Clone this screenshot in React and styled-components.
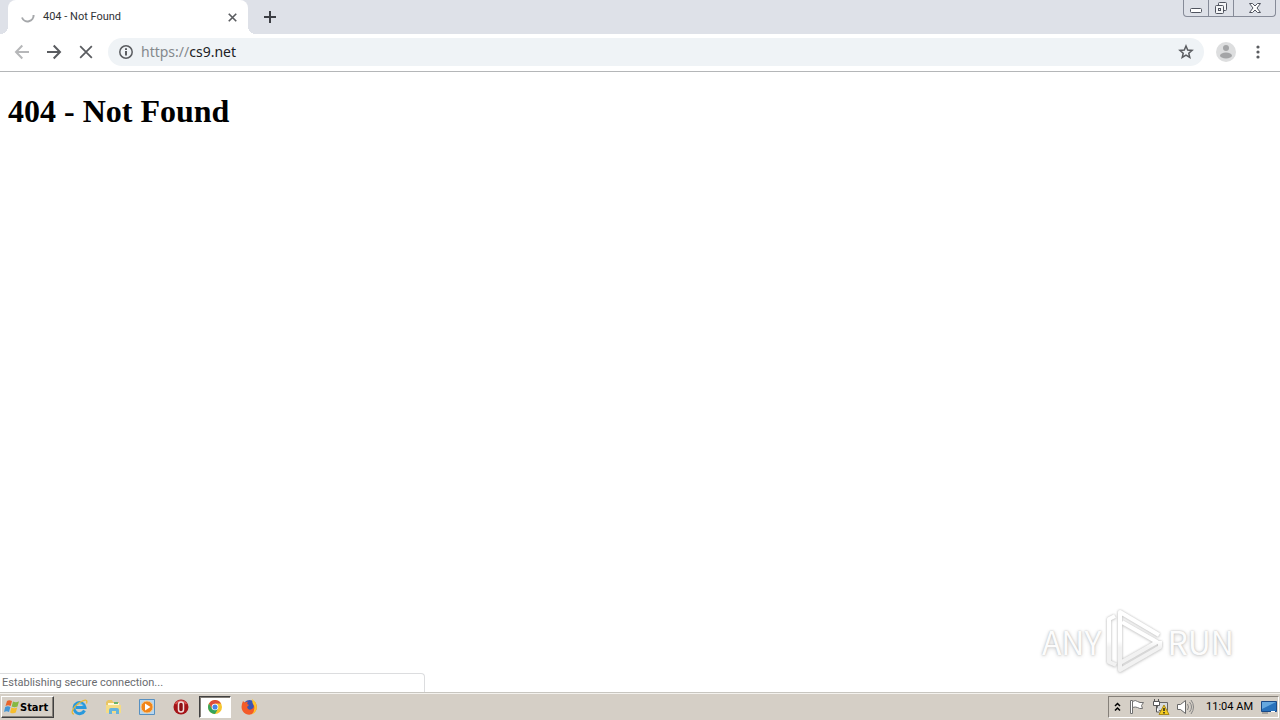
import styled, { createGlobalStyle } from "styled-components";

const GlobalStyle = createGlobalStyle`
    * {
        box-sizing: border-box;
    }
    body {
        margin: 0;
        background: #fff;
        font-family: Roboto, "Liberation Sans", sans-serif;
    }
    button {
        padding: 0;
        border: none;
        background: none;
        color: inherit;
        font: inherit;
    }
    svg {
        display: block;
        flex: none;
    }
`

const Desktop = styled.div`
    display: flex;
    flex-direction: column;
    min-height: 100vh;
`

const TabStrip = styled.header`
    display: flex;
    justify-content: space-between;
    height: 34px;
    padding: 0 4px 0 8px;
    background: #dee1e8;
`
const TabGroup = styled.div`
    display: flex;
    align-items: center;
    gap: 12px;
`
const Tab = styled.div`
    position: relative;
    display: flex;
    align-items: center;
    gap: 7px;
    width: 240px;
    height: 34px;
    padding: 0 8px 0 12px;
    border-radius: 8px 8px 0 0;
    background: #fff;
    &::before,
    &::after {
        content: "";
        position: absolute;
        bottom: 0;
        width: 8px;
        height: 8px;
    }
    &::before {
        left: -8px;
        background: radial-gradient(circle at 0 0, transparent 8px, #fff 8px);
    }
    &::after {
        right: -8px;
        background: radial-gradient(circle at 100% 0, transparent 8px, #fff 8px);
    }
`
const TabTitle = styled.span`
    flex: 1;
    font-size: 11px;
    line-height: 16px;
    color: #303236;
`
const IconButton = styled.button`
    display: flex;
    align-items: center;
    justify-content: center;
    width: ${({ $size }) => $size || 20}px;
    height: ${({ $size }) => $size || 20}px;
    color: ${({ $color }) => $color || "#5a5c60"};
`
const WindowControls = styled.div`
    display: flex;
    height: 17px;
    border: 1px solid #868b98;
    border-top: none;
    border-radius: 0 0 4px 4px;
`
const WindowButton = styled.button`
    display: flex;
    align-items: center;
    justify-content: center;
    width: ${({ $width }) => $width}px;
    color: #50545f;
    & + & {
        border-left: 1px solid #868b98;
    }
`

const Toolbar = styled.nav`
    display: flex;
    align-items: center;
    height: 38px;
    padding: 0 12px 1px;
    border-bottom: 1px solid #b4b6b8;
    background: #fff;
`
const NavButtons = styled.div`
    display: flex;
    gap: 12px;
    margin-right: 12px;
`
const Omnibox = styled.div`
    display: flex;
    flex: 1;
    align-items: center;
    gap: 5px;
    height: 28px;
    padding: 0 8px;
    border-radius: 14px;
    background: #eff3f6;
`
const Address = styled.a`
    flex: 1;
    font-family: "Noto Sans", sans-serif;
    font-size: 14px;
    line-height: 20px;
    text-decoration: none;
    color: #202124;
`
const Scheme = styled.span`
    color: #85898d;
`
const ToolbarActions = styled.div`
    display: flex;
    gap: 12px;
    margin-left: 12px;
`

const Page = styled.main`
    position: relative;
    flex: 1;
    padding: 21px 8px;
    background: #fff;
`
const Heading = styled.h1`
    margin: 0;
    font-family: "Liberation Serif", serif;
    font-size: 32px;
    font-weight: 700;
    line-height: 37px;
    color: #000;
`
const StatusBubble = styled.div`
    position: absolute;
    bottom: 0;
    left: 0;
    width: 425px;
    height: 19px;
    padding-left: 2px;
    border: 1px solid #dcdddf;
    border-width: 1px 1px 0 0;
    border-radius: 0 4px 0 0;
    font-size: 11px;
    line-height: 18px;
    color: #6a6c70;
    background: #fff;
`
const Watermark = styled.div`
    position: absolute;
    right: 46px;
    bottom: 19px;
    display: flex;
    align-items: center;
    gap: 4px;
    font-family: "Noto Sans CJK SC", sans-serif;
    font-size: 32px;
    line-height: 64px;
    color: #fcfcfc;
    text-shadow: 0 0 2px #b8b8b8, 0 1px 4px #d0d0d0;
`
const PlayLogo = styled.svg`
    overflow: visible;
    filter: drop-shadow(0 0 1px #c0c0c0) drop-shadow(0 1px 1px #e0e0e0);
`

const Taskbar = styled.footer`
    display: flex;
    align-items: center;
    justify-content: space-between;
    height: 28px;
    padding: 2px 1px 1px;
    border-top: 1px solid #c8c6c0;
    background: #d5cfc6;
    box-shadow: inset 0 1px #f4f2ee;
`
const Launchers = styled.div`
    display: flex;
    align-items: center;
    gap: 2px;
`
const StartButton = styled.button`
    display: flex;
    align-items: center;
    width: 53px;
    height: 22px;
    margin-right: 7px;
    padding-left: 2px;
    border: 1px solid;
    border-color: #fff #404040 #404040 #fff;
    box-shadow: inset -1px -1px #858079;
    font-family: "DejaVu Sans Condensed", "DejaVu Sans", sans-serif;
    font-size: 11px;
    font-stretch: condensed;
    font-weight: 700;
    color: #000;
`
const Launcher = styled.button`
    display: flex;
    align-items: center;
    justify-content: center;
    width: 32px;
    height: 22px;
    border: 1px solid transparent;
    ${({ $active }) => $active && `
        border-color: #404040 #fff #fff #404040;
        background: #fff;
        box-shadow: inset 1px 1px #858079;
    `}
`
const Tray = styled.div`
    display: flex;
    align-items: center;
    gap: 6px;
    height: 22px;
    padding: 0 1px 0 4px;
    border: 1px solid;
    border-color: #858079 #fff #fff #858079;
`
const Clock = styled.time`
    margin: 0 2px 0 6px;
    font-size: 11px;
    line-height: 16px;
    color: #000;
`

const Spinner = () => (
    <svg width="16" height="16" viewBox="0 0 16 16" fill="none" stroke="#a5a7aa" strokeWidth="2">
        <path d="M2 8.500A6 6 0 0 0 13.600 6" />
    </svg>
)
const Cross = ({ size, width }) => (
    <svg width={size} height={size} viewBox="0 0 12 12" stroke="currentColor" strokeWidth={width}>
        <path d="m1 1 10 10M11 1 1 11" />
    </svg>
)
const Arrow = ({ back }) => (
    <svg width="16" height="16" viewBox="0 0 16 16" fill="none" stroke="currentColor" strokeWidth="2">
        {back ? <path d="M15 8H2M8.300 1.500 2 8l6.300 6.500" /> : <path d="M1 8h13M7.700 1.500 14 8l-6.300 6.500" />}
    </svg>
)
const Info = () => (
    <svg width="14" height="14" viewBox="0 0 14 14" fill="none" stroke="currentColor" strokeWidth="1.5">
        <circle cx="7" cy="7" r="6.200" />
        <path d="M7 6v4.500M7 3.300v1.600" strokeWidth="2" />
    </svg>
)
const Star = () => (
    <svg width="16" height="16" viewBox="0 0 16 16" fill="none" stroke="currentColor" strokeWidth="1.500">
        <path d="m8 2 1.700 4 4.400.4-3.300 2.900 1 4.200L8 11.200l-3.800 2.300 1-4.200-3.300-2.900 4.400-.4z" />
    </svg>
)
const Avatar = () => (
    <svg width="20" height="20" viewBox="0 0 20 20">
        <circle cx="10" cy="10" r="10" fill="#dddedf" />
        <circle cx="10" cy="6" r="3" fill="#a4a5a7" />
        <ellipse cx="10" cy="13.500" rx="6" ry="3" fill="#a4a5a7" />
    </svg>
)
const Dots = () => (
    <svg width="4" height="14" viewBox="0 0 4 14" fill="currentColor">
        <circle cx="2" cy="2" r="1.600" />
        <circle cx="2" cy="7" r="1.600" />
        <circle cx="2" cy="12" r="1.600" />
    </svg>
)
const Minimize = () => (
    <svg width="14" height="14" viewBox="0 0 14 14" fill="#fff" stroke="currentColor">
        <rect x="1.500" y="7.500" width="11" height="4" rx="1" />
    </svg>
)
const Restore = () => (
    <svg width="14" height="14" viewBox="0 0 14 14" fill="#f4f5f7" stroke="currentColor">
        <rect x="4.500" y="1.500" width="8" height="8" rx="1" />
        <rect x="1.500" y="4.500" width="8" height="8" rx="1" />
        <rect x="4.500" y="7.500" width="2" height="2" />
    </svg>
)
const CloseWindow = () => (
    <svg width="14" height="14" viewBox="0 0 14 14" fill="#fff" stroke="currentColor">
        <path d="M1.500 2.500h3L7 5l2.500-2.500h3L9 7l3.500 4.500h-3L7 9l-2.500 2.500h-3L5 7z" />
    </svg>
)
const Play = () => (
    <PlayLogo width="58" height="64" viewBox="0 0 58 64" fill="none" strokeLinejoin="round">
        <defs>
            <linearGradient id="fade" x1="0" y1="0" x2="0" y2="64" gradientUnits="userSpaceOnUse">
                <stop offset=".5" stopColor="#fff" />
                <stop offset=".600" stopColor="#f2f2f2" />
            </linearGradient>
        </defs>
        <g stroke="url(#fade)" strokeWidth="4">
            <path d="M10 7 4 10v43l7 3" />
            <path d="M15 53V3l39 23" />
            <path d="M17 13l35 20-37 21" />
            <path d="M15 53v8l40-23v-6" />
        </g>
    </PlayLogo>
)
const WindowsFlag = () => (
    <svg width="16" height="16" viewBox="0 0 16 16">
        <path d="M3 2q2-1.600 5 0L6.700 7Q4 5.700 1.500 7z" fill="#e9652b" />
        <path d="M9 2.500q3 1.600 6-.2L13.500 7.500q-3 1.500-5.800 0z" fill="#86b841" />
        <path d="M1.200 8q2.600-1.400 5.200 0L5 13q-2.400-1.300-5 0z" fill="#4596d5" />
        <path d="M7.400 8.500q2.800 1.500 5.800.1L11.800 13.600q-3 1.500-5.700-.2z" fill="#f6bd2c" />
    </svg>
)
const Explorer = () => (
    <svg width="17" height="17" viewBox="0 0 17 17" fill="none">
        <path d="M13.500 11.500a5.500 5.500 0 1 1 .5-3H5" stroke="#2999dc" strokeWidth="3" />
        <path d="M12 6.500a4 4 0 0 0-6-1" stroke="#83d1f4" />
        <path d="M3 15C-1 15 2 8 8 4s9-4 7.500.5" stroke="#e8b934" strokeWidth="1.300" />
    </svg>
)
const Folder = () => (
    <svg width="17" height="17" viewBox="0 0 17 17">
        <path d="M1 3 3 1h4l1 2h6v10H1z" fill="#e9c564" />
        <path d="M3 4h11v7H3z" fill="#fff9d8" />
        <path d="M1 6h15v8H1z" fill="#f4dc85" />
        <path d="M4 15v-4q0-2 2-2h6q2 0 2 2v4h-3v-3H7v3z" fill="#65b3dc" />
        <path d="M9 4h4" stroke="#6bb36b" strokeWidth="2" />
    </svg>
)
const MediaPlayer = () => (
    <svg width="16" height="16" viewBox="0 0 16 16">
        <path d="M.5.500h15v15H.5z" fill="#b7d6ef" stroke="#5790c1" />
        <circle cx="8" cy="8" r="6" fill="#f18519" stroke="#f8c98a" />
        <path d="m6 4.500 5.500 3.500L6 11.500z" fill="#fff" />
    </svg>
)
const Opera = () => (
    <svg width="16" height="16" viewBox="0 0 16 16">
        <circle cx="8" cy="8" r="7.500" fill="#a51418" />
        <path d="M2.500 5a6.500 6.500 0 0 1 11 0" fill="none" stroke="#d8524e" strokeWidth="1.500" />
        <rect x="5.500" y="3" width="5" height="10" rx="2.500" fill="#8c1014" stroke="#f0dedc" strokeWidth="1.500" />
    </svg>
)
const Chrome = () => (
    <svg width="14" height="14" viewBox="0 0 16 16">
        <circle cx="8" cy="8" r="8" fill="#f6c52e" />
        <path d="M1.100 4A8 8 0 0 1 15 4H8L4.500 10z" fill="#de4c3c" />
        <path d="M1.100 4A8 8 0 0 0 8 16l3.500-6H4.500z" fill="#35a45a" />
        <circle cx="8" cy="8" r="3.800" fill="#fff" />
        <circle cx="8" cy="8" r="2.900" fill="#4585e8" />
    </svg>
)
const Firefox = () => (
    <svg width="16" height="16" viewBox="0 0 16 16">
        <circle cx="8.500" cy="7.500" r="6.500" fill="#3a55b5" />
        <path d="M2 2q1 1 2 1.500 2-1 3-.5Q5 5 8 6L6 8q1 4 5 2 3-2 1-5 2 0 1.500-3Q18 8 14 13q-4 4-9 2-7-4-3-13z" fill="#f35b29" />
        <path d="M11 0q6 4 4.500 10-1 4-5 5.500 4-4 2.500-9-2-2-2-6.500z" fill="#ffc52b" />
    </svg>
)
const Chevrons = () => (
    <svg width="9" height="10" viewBox="0 0 9 10" fill="none" stroke="#000" strokeWidth="1.500">
        <path d="m2 4 2.500-2.500L7 4M2 8.500 4.500 6 7 8.500" />
    </svg>
)
const ActionFlag = () => (
    <svg width="18" height="18" viewBox="0 0 18 18" fill="#fff" stroke="#707070">
        <path d="M2.500 2.500h2v13h-2z" />
        <path d="M4.500 3.500q3-2 5 0 2 1.500 6 1l-2 3 1 3q-3 .5-5-1-2-1-5 0z" />
    </svg>
)
const Network = () => (
    <svg width="18" height="18" viewBox="0 0 18 18">
        <path d="M5.500 4.500h10v8h-10z" fill="#d8dbdd" stroke="#666" />
        <path d="M8 15.500h6" stroke="#666" />
        <path d="M2.500 1v3M6.500 1v3M1.500 3.500h6v4h-6zM4.500 8v6h3" fill="#fff" stroke="#555" />
        <path d="m12 7 5 9.500H7z" fill="#f5cc20" stroke="#a98918" />
        <path d="M12 10v3M12 14v1.500" stroke="#222" strokeWidth="1.500" />
    </svg>
)
const Volume = () => (
    <svg width="18" height="18" viewBox="0 0 18 18" fill="none" stroke="#858585">
        <path d="M1.500 6.500h3l5-4v13l-5-4h-3z" fill="#fff" stroke="#666" />
        <path d="M11.500 6q2 3 0 6M13.500 4q4 5 0 10M15 2q5 7 0 14" />
    </svg>
)
const ShowDesktop = () => (
    <svg width="16" height="14" viewBox="0 0 16 14">
        <path d="M.5 1.500h15v10H.5z" fill="#2872bc" stroke="#194987" />
        <path d="M1 2h14L1 9z" fill="#65a8df" />
        <path d="M1 13h6" stroke="#777" />
        <path d="M10 11.500h4" stroke="#fff" />
    </svg>
)

const launchers = [
    { name: "Internet Explorer", Icon: Explorer },
    { name: "Windows Explorer", Icon: Folder },
    { name: "Media Player", Icon: MediaPlayer },
    { name: "Opera", Icon: Opera },
    { name: "Chrome", Icon: Chrome, active: true },
    { name: "Firefox", Icon: Firefox },
]

const App = () => (
    <Desktop>
        <GlobalStyle />
        <TabStrip>
            <TabGroup>
                <Tab>
                    <Spinner />
                    <TabTitle>404 - Not Found</TabTitle>
                    <IconButton $size={16} aria-label="Close tab"><Cross size={9} width={2.2} /></IconButton>
                </Tab>
                <IconButton aria-label="New tab" $color="#3c3e44">
                    <svg width="12" height="12" viewBox="0 0 12 12" stroke="currentColor" strokeWidth="2">
                        <path d="M6 0v12M0 6h12" />
                    </svg>
                </IconButton>
            </TabGroup>
            <WindowControls>
                <WindowButton $width={24} aria-label="Minimize"><Minimize /></WindowButton>
                <WindowButton $width={25} aria-label="Restore"><Restore /></WindowButton>
                <WindowButton $width={42} aria-label="Close"><CloseWindow /></WindowButton>
            </WindowControls>
        </TabStrip>
        <Toolbar>
            <NavButtons>
                <IconButton aria-label="Back" $color="#b6b7b9"><Arrow back /></IconButton>
                <IconButton aria-label="Forward"><Arrow /></IconButton>
                <IconButton aria-label="Stop"><Cross size={14} width={1.5} /></IconButton>
            </NavButtons>
            <Omnibox>
                <IconButton aria-label="Site information"><Info /></IconButton>
                <Address href="https://cs9.net"><Scheme>https://</Scheme>cs9.net</Address>
                <IconButton aria-label="Bookmark"><Star /></IconButton>
            </Omnibox>
            <ToolbarActions>
                <IconButton aria-label="Profile"><Avatar /></IconButton>
                <IconButton aria-label="Menu"><Dots /></IconButton>
            </ToolbarActions>
        </Toolbar>
        <Page>
            <Heading>404 - Not Found</Heading>
            <StatusBubble>Establishing secure connection...</StatusBubble>
            <Watermark>
                <span>ANY</span>
                <Play />
                <span>RUN</span>
            </Watermark>
        </Page>
        <Taskbar>
            <Launchers>
                <StartButton><WindowsFlag />Start</StartButton>
                {launchers.map(({ name, Icon, active }) => (
                    <Launcher key={name} aria-label={name} $active={active}><Icon /></Launcher>
                ))}
            </Launchers>
            <Tray>
                <Chevrons />
                <ActionFlag />
                <Network />
                <Volume />
                <Clock>11:04 AM</Clock>
                <ShowDesktop />
            </Tray>
        </Taskbar>
    </Desktop>
)

export default App
